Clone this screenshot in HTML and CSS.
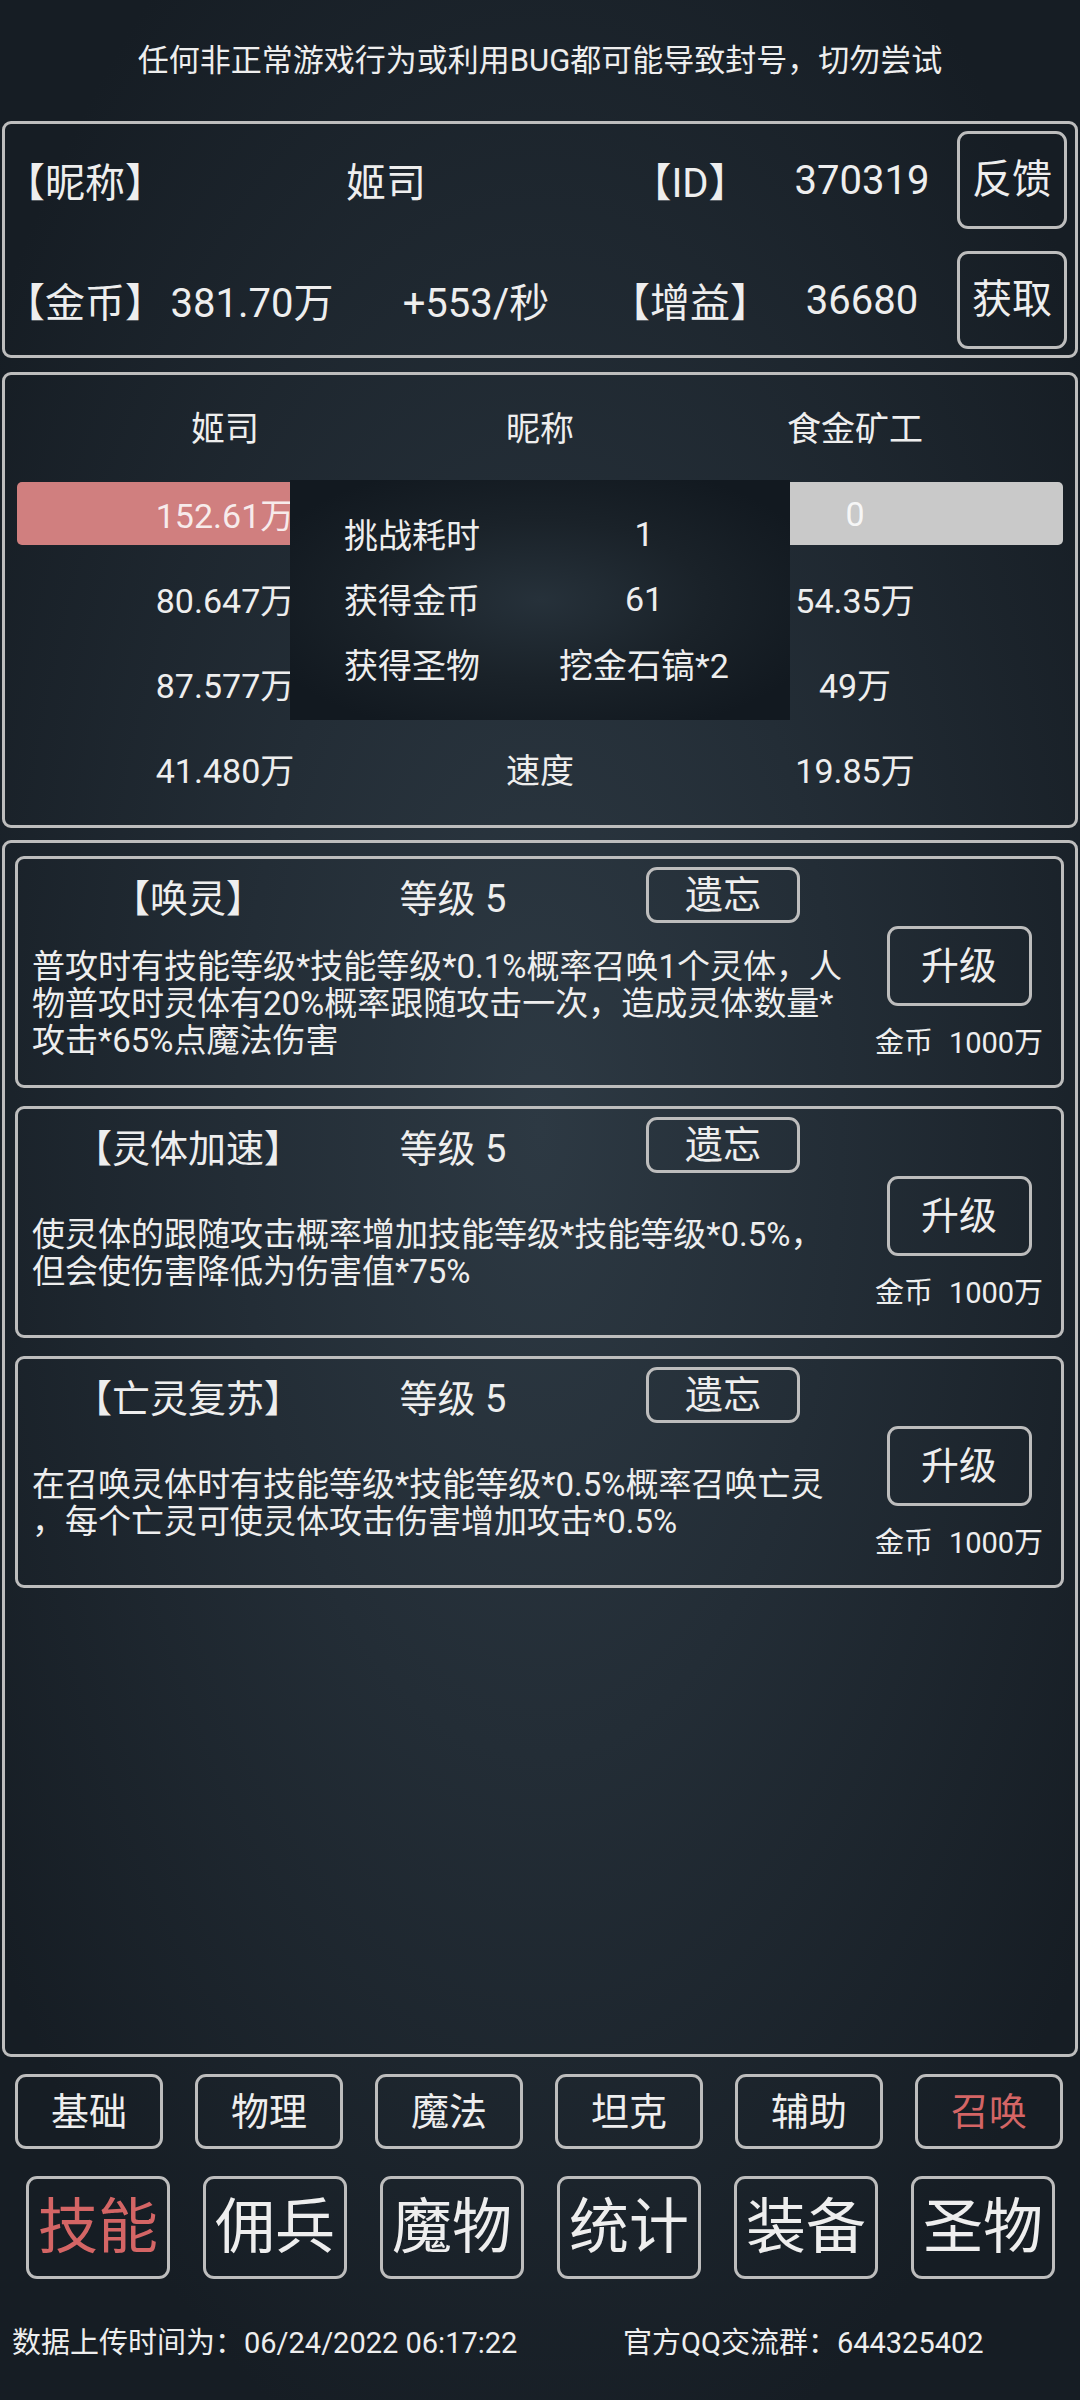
FILE: index.html
```html
<!DOCTYPE html>
<html lang="zh-CN">
<head>
<meta charset="utf-8">
<title>技能</title>
<link rel="stylesheet" href="styles.css">
</head>
<body>
<div class="screen">
  <div class="notice">任何非正常游戏行为或利用BUG都可能导致封号，切勿尝试</div>

  <section class="panel info">
    <div class="info-row">
      <div class="cell c1">【昵称】</div>
      <div class="cell c23">姬司</div>
      <div class="cell c4">【ID】</div>
      <div class="cell c5">370319</div>
      <button class="btn side-btn">反馈</button>
    </div>
    <div class="info-row">
      <div class="cell c1">【金币】</div>
      <div class="cell c2">381.70万</div>
      <div class="cell c3">+553/秒</div>
      <div class="cell c4">【增益】</div>
      <div class="cell c5">36680</div>
      <button class="btn side-btn">获取</button>
    </div>
  </section>

  <section class="panel battle">
    <div class="grid3 head"><span>姬司</span><span>昵称</span><span>食金矿工</span></div>
    <div class="grid3 hpbar"><span class="hp-left">152.61万</span><span></span><span class="hp-right">0</span></div>
    <div class="grid3 stat"><span>80.647万</span><span></span><span>54.35万</span></div>
    <div class="grid3 stat"><span>87.577万</span><span></span><span>49万</span></div>
    <div class="grid3 stat"><span>41.480万</span><span>速度</span><span>19.85万</span></div>

    <div class="result">
      <div class="res-row"><span class="res-label">挑战耗时</span><span class="res-val">1</span></div>
      <div class="res-row"><span class="res-label">获得金币</span><span class="res-val">61</span></div>
      <div class="res-row"><span class="res-label">获得圣物</span><span class="res-val">挖金石镐*2</span></div>
    </div>
  </section>

  <section class="panel skills">
    <div class="card">
      <div class="card-main">
        <div class="card-top">
          <div class="sk-name">【唤灵】</div>
          <div class="sk-level">等级 5</div>
          <button class="btn forget">遗忘</button>
        </div>
        <div class="desc"><p>普攻时有技能等级*技能等级*0.1%概率召唤1个灵体，人<br>物普攻时灵体有20%概率跟随攻击一次，造成灵体数量*<br>攻击*65%点魔法伤害</p></div>
      </div>
      <div class="card-side">
        <button class="btn upgrade">升级</button>
        <div class="cost">金币<span class="cost-num">1000万</span></div>
      </div>
    </div>

    <div class="card">
      <div class="card-main">
        <div class="card-top">
          <div class="sk-name">【灵体加速】</div>
          <div class="sk-level">等级 5</div>
          <button class="btn forget">遗忘</button>
        </div>
        <div class="desc"><p>使灵体的跟随攻击概率增加技能等级*技能等级*0.5%，<br>但会使伤害降低为伤害值*75%</p></div>
      </div>
      <div class="card-side">
        <button class="btn upgrade">升级</button>
        <div class="cost">金币<span class="cost-num">1000万</span></div>
      </div>
    </div>

    <div class="card">
      <div class="card-main">
        <div class="card-top">
          <div class="sk-name">【亡灵复苏】</div>
          <div class="sk-level">等级 5</div>
          <button class="btn forget">遗忘</button>
        </div>
        <div class="desc"><p>在召唤灵体时有技能等级*技能等级*0.5%概率召唤亡灵<br>，每个亡灵可使灵体攻击伤害增加攻击*0.5%</p></div>
      </div>
      <div class="card-side">
        <button class="btn upgrade">升级</button>
        <div class="cost">金币<span class="cost-num">1000万</span></div>
      </div>
    </div>
  </section>

  <nav class="subtabs">
    <button class="btn subtab">基础</button>
    <button class="btn subtab">物理</button>
    <button class="btn subtab">魔法</button>
    <button class="btn subtab">坦克</button>
    <button class="btn subtab">辅助</button>
    <button class="btn subtab active">召唤</button>
  </nav>

  <nav class="maintabs">
    <button class="btn maintab active">技能</button>
    <button class="btn maintab">佣兵</button>
    <button class="btn maintab">魔物</button>
    <button class="btn maintab">统计</button>
    <button class="btn maintab">装备</button>
    <button class="btn maintab">圣物</button>
  </nav>

  <footer class="footer">
    <span class="upload">数据上传时间为：06/24/2022 06:17:22</span>
    <span class="qq">官方QQ交流群：644325402</span>
  </footer>
</div>
</body>
</html>
```

FILE: styles.css
```css
* { box-sizing: border-box; }

html, body {
  margin: 0;
  padding: 0;
}

body {
  width: 1080px;
  height: 2400px;
  background: #151b22;
  font-family: Roboto, "Noto Sans CJK SC", sans-serif;
  color: #eeeeee;
}

.screen {
  width: 1080px;
  height: 2400px;
  display: flex;
  flex-direction: column;
  background: radial-gradient(ellipse 62% 58% at 50% 47%, #2d3943 0%, #232d36 45%, #161d24 100%);
}

.notice {
  height: 121px;
  display: flex;
  align-items: center;
  justify-content: center;
  font-size: 31px;
  padding-bottom: 7px;
}

.panel {
  margin: 0 2px;
  border: 3px solid #bdbdbd;
  border-radius: 9px;
}

.btn {
  background: transparent;
  border: 3px solid #bdbdbd;
  border-radius: 11px;
  color: #eeeeee;
  font-family: inherit;
  padding: 0;
  display: flex;
  align-items: center;
  justify-content: center;
  line-height: 1;
}

/* info panel */
.info {
  height: 237px;
  padding: 7px 8px 7px 0;
  display: flex;
  flex-direction: column;
  gap: 22px;
}

.info-row {
  height: 98px;
  display: grid;
  grid-template-columns: 151px 192px 256px 172px 172px 110px;
  align-items: center;
  font-size: 40px;
}

.cell { text-align: center; white-space: nowrap; }
.c1 { text-align: left; }
.c23 { grid-column: 2 / 4; padding-left: 12px; }
.c4 { grid-column: 4; }
.c5 { grid-column: 5; }

.side-btn {
  grid-column: 6;
  width: 110px;
  height: 98px;
  font-size: 40px;
  position: relative;
  left: 9px;
}

/* battle panel */
.battle {
  height: 456px;
  margin-top: 14px;
  padding: 9px 12px 10px;
  position: relative;
  font-size: 34px;
}

.grid3 {
  display: grid;
  grid-template-columns: 315px 315px 315px;
  justify-content: center;
  align-items: center;
  text-align: center;
  white-space: nowrap;
}

.head { height: 85px; }

.hpbar {
  height: 63px;
  margin-top: 13px;
  margin-bottom: 11px;
  border-radius: 5px;
  background: linear-gradient(to right, #d07f7f 0%, #d07f7f 50%, #c9c9c9 50%, #c9c9c9 100%);
}

.hp-left, .hp-right { color: rgba(255, 255, 255, 0.85); }

.stat { height: 85px; }

.result {
  position: absolute;
  left: 285px;
  top: 105px;
  width: 500px;
  height: 240px;
  padding-top: 21px;
  background: radial-gradient(ellipse 60% 60% at 50% 50%, #26313a 0%, #1a2229 55%, #121920 100%);
}

.res-row {
  height: 65px;
  display: grid;
  grid-template-columns: 54px 200px 200px;
  align-items: center;
  white-space: nowrap;
}

.res-label { grid-column: 2; }
.res-val { grid-column: 3; text-align: center; }

/* skills panel */
.skills {
  height: 1217px;
  margin-top: 12px;
  padding: 13px 11px 0 10px;
  display: flex;
  flex-direction: column;
  gap: 18px;
}

.card {
  height: 232px;
  border: 3px solid #bdbdbd;
  border-radius: 9px;
  display: flex;
}

.card-main {
  flex: 1;
  display: flex;
  flex-direction: column;
}

.card-top {
  height: 56px;
  margin-top: 8px;
  display: flex;
  align-items: center;
  font-size: 38px;
  white-space: nowrap;
}

.sk-name { width: 340px; text-align: center; }
.sk-level { width: 190px; text-align: center; }

.forget {
  margin-left: 98px;
  width: 154px;
  height: 56px;
  font-size: 38px;
}

.desc {
  flex: 1;
  display: flex;
  align-items: center;
  padding-left: 14px;
  padding-bottom: 2px;
}

.desc p {
  margin: 0;
  font-size: 33px;
  line-height: 37px;
  white-space: nowrap;
}

.card-side {
  width: 178px;
  margin-right: 13px;
  display: flex;
  flex-direction: column;
  align-items: center;
}

.upgrade {
  margin-top: 67px;
  width: 145px;
  height: 80px;
  font-size: 38px;
}

.cost {
  margin-top: 17px;
  height: 40px;
  line-height: 40px;
  font-size: 29px;
  white-space: nowrap;
}

.cost-num { margin-left: 16px; }

/* tabs */
.subtabs {
  margin-top: 17px;
  padding-left: 15px;
  display: flex;
  gap: 32px;
}

.subtab {
  width: 148px;
  height: 75px;
  font-size: 38px;
}

.maintabs {
  margin-top: 27px;
  padding-left: 26px;
  display: flex;
  gap: 33px;
}

.maintab {
  width: 144px;
  height: 103px;
  font-size: 60px;
}

.active { color: #d46565; }

.footer {
  margin-top: 41px;
  height: 40px;
  padding-left: 12px;
  display: flex;
  align-items: center;
  font-size: 29px;
  white-space: nowrap;
}

.upload { width: 611px; }
```
